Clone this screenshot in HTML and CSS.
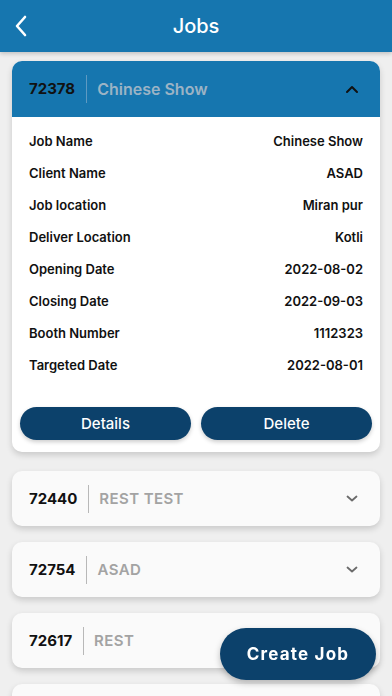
FILE: index.html
```html
<!DOCTYPE html>
<html lang="en">
<head>
    <meta charset="UTF-8">
    <meta name="viewport" content="width=device-width, initial-scale=1.0">
    <title>Jobs</title>
    <link rel="stylesheet" href="styles.css">
</head>
<body>
    <header class="top-bar">
        <span class="back">
            <svg width="14" height="22" viewBox="0 0 14 22"><path d="M11 2 L3 11 L11 20" fill="none" stroke="#fff" stroke-width="2.6" stroke-linecap="round" stroke-linejoin="round"/></svg>
        </span>
        <h1>Jobs</h1>
    </header>

    <div class="job-list">
        <!-- expanded job -->
        <div class="job-card open">
            <div class="job-head">
                <span class="job-id">72378</span>
                <span class="job-title">Chinese Show</span>
                <svg class="chev" width="14" height="9" viewBox="0 0 14 9"><path d="M2 7 L7 2 L12 7" fill="none" stroke="#111" stroke-width="2" stroke-linecap="round" stroke-linejoin="round"/></svg>
            </div>
            <div class="job-body">
                <div class="row"><span>Job Name</span><span>Chinese Show</span></div>
                <div class="row"><span>Client Name</span><span>ASAD</span></div>
                <div class="row"><span>Job location</span><span>Miran pur</span></div>
                <div class="row"><span>Deliver Location</span><span>Kotli</span></div>
                <div class="row"><span>Opening Date</span><span>2022-08-02</span></div>
                <div class="row"><span>Closing Date</span><span>2022-09-03</span></div>
                <div class="row"><span>Booth Number</span><span>1112323</span></div>
                <div class="row"><span>Targeted Date</span><span>2022-08-01</span></div>
                <div class="actions">
                    <button class="btn">Details</button>
                    <button class="btn">Delete</button>
                </div>
            </div>
        </div>

        <div class="job-card">
            <div class="job-head">
                <span class="job-id">72440</span>
                <span class="job-title">REST TEST</span>
                <svg class="chev" width="14" height="9" viewBox="0 0 14 9"><path d="M2.5 2.5 L7 6.5 L11.5 2.5" fill="none" stroke="#6b6b6b" stroke-width="1.8" stroke-linecap="round" stroke-linejoin="round"/></svg>
            </div>
        </div>

        <div class="job-card">
            <div class="job-head">
                <span class="job-id">72754</span>
                <span class="job-title">ASAD</span>
                <svg class="chev" width="14" height="9" viewBox="0 0 14 9"><path d="M2.5 2.5 L7 6.5 L11.5 2.5" fill="none" stroke="#6b6b6b" stroke-width="1.8" stroke-linecap="round" stroke-linejoin="round"/></svg>
            </div>
        </div>

        <div class="job-card">
            <div class="job-head">
                <span class="job-id">72617</span>
                <span class="job-title">REST</span>
                <svg class="chev" width="14" height="9" viewBox="0 0 14 9"><path d="M2.5 2.5 L7 6.5 L11.5 2.5" fill="none" stroke="#6b6b6b" stroke-width="1.8" stroke-linecap="round" stroke-linejoin="round"/></svg>
            </div>
        </div>

        <!-- next card, only its top edge shows -->
        <div class="job-card">
            <div class="job-head"></div>
        </div>
    </div>

    <button class="create-btn">Create Job</button>
</body>
</html>
```

FILE: styles.css
```css
body {
    margin: 0;
    font-family: Inter, "Noto Sans", sans-serif;
    background-color: #efefef;
    height: 696px;
    overflow: hidden;
}
.top-bar {
    height: 52px;
    background-color: #1676af;
    box-shadow: 0 2px 4px rgba(0,0,0,0.18);
    display: flex;
    align-items: center;
    justify-content: center;
    position: relative;
}
.top-bar h1 {
    margin: 0;
    color: #fff;
    font-size: 20px;
    font-weight: 500;
}
.back {
    position: absolute;
    left: 14px;
    top: 15px;
    display: flex;
}
.job-list {
    padding: 9px 12px;
    display: flex;
    flex-direction: column;
    gap: 16px;
}
.job-card {
    background: #fafafa;
    border-radius: 10px;
    box-shadow: 0 3px 6px rgba(0,0,0,0.16);
    overflow: hidden;
}
.job-card.open {
    background: #fff;
    margin-bottom: 3px;
}
.job-head {
    height: 55px;
    display: flex;
    align-items: center;
    padding: 0 21px 0 17px;
}
.open .job-head {
    height: 56px;
    background-color: #1676af;
}
.job-id {
    font-size: 15px;
    font-weight: 700;
    color: #111;
    padding-right: 11px;
    border-right: 1px solid #b8b8b8;
    line-height: 28px;
}
.open .job-id {
    border-right-color: #5e9ac2;
}
.job-title {
    flex: 1;
    padding-left: 10px;
    font-size: 15px;
    font-weight: 600;
    color: #a3a3a3;
    letter-spacing: 0.4px;
}
.open .job-title {
    color: #9bb3c5;
    font-size: 16px;
    letter-spacing: 0;
}
.job-body {
    padding: 8px 8px 12px;
}
.row {
    height: 32px;
    display: flex;
    align-items: center;
    justify-content: space-between;
    padding: 0 9px;
    font-size: 13px;
    font-weight: 600;
    color: #111;
}
.row:last-of-type {
    margin-bottom: 1px;
}
.actions {
    display: flex;
    gap: 10px;
    margin-top: 26px;
}
.btn {
    flex: 1;
    height: 33px;
    border: none;
    border-radius: 17px;
    background-color: #0c416b;
    color: #fff;
    font-family: Inter, "Noto Sans", sans-serif;
    font-size: 15px;
    font-weight: 500;
    box-shadow: 0 2px 4px rgba(0,0,0,0.2);
}
.create-btn {
    position: fixed;
    right: 16px;
    bottom: 16px;
    width: 156px;
    height: 52px;
    border: none;
    border-radius: 26px;
    background-color: #0c416b;
    color: #fff;
    font-family: Inter, "Noto Sans", sans-serif;
    font-size: 17px;
    font-weight: 700;
    letter-spacing: 1.2px;
    box-shadow: 0 3px 6px rgba(0,0,0,0.25);
}
```
